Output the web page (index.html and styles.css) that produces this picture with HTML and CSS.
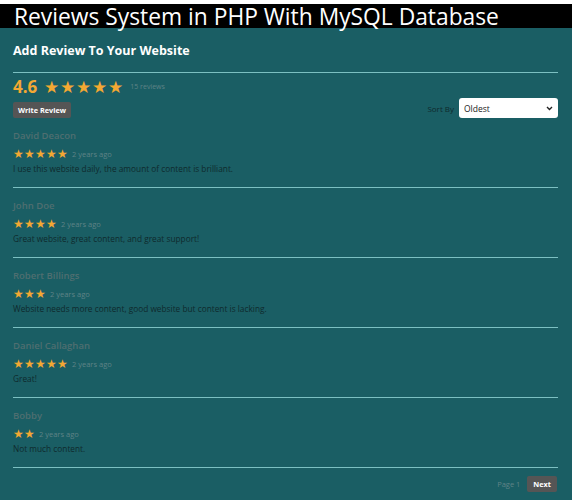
FILE: index.html
```html
<!DOCTYPE html>
<html lang="en">
<head>
  <meta charset="UTF-8" />
  <meta name="viewport" content="width=device-width, initial-scale=1.0"/>
  <title>Reviews System in PHP With MySQL Database</title>
  <link rel="stylesheet" href="styles.css">
</head>
<body>
  <h1 class="site-title">Reviews System in PHP With MySQL Database</h1>

  <div class="content">
    <h2>Add Review To Your Website</h2>

    <div class="reviews">
      <div class="overall">
        <div class="summary">
          <div class="rating">
            <span class="num">4.6</span>
            <span class="stars">★★★★★</span>
            <span class="total">15 reviews</span>
          </div>
          <a href="#" class="btn write-review-btn">Write Review</a>
        </div>
        <div class="sort">
          <label for="sort_by">Sort By</label>
          <div class="select-wrap">
            <select id="sort_by">
              <option value="oldest" selected>Oldest</option>
              <option value="newest">Newest</option>
              <option value="rating_highest">Highest Rating</option>
              <option value="rating_lowest">Lowest Rating</option>
            </select>
            <svg class="chevron" width="7" height="5" viewBox="0 0 7 5"><path d="M1 1l2.5 2.5L6 1" fill="none" stroke="#222" stroke-width="1.4"/></svg>
          </div>
        </div>
      </div>

      <div class="review">
        <h3 class="name">David Deacon</h3>
        <div class="meta">
          <span class="stars">★★★★★</span>
          <span class="date">2 years ago</span>
        </div>
        <p class="content-text">I use this website daily, the amount of content is brilliant.</p>
      </div>

      <div class="review">
        <h3 class="name">John Doe</h3>
        <div class="meta">
          <span class="stars">★★★★</span>
          <span class="date">2 years ago</span>
        </div>
        <p class="content-text">Great website, great content, and great support!</p>
      </div>

      <div class="review">
        <h3 class="name">Robert Billings</h3>
        <div class="meta">
          <span class="stars">★★★</span>
          <span class="date">2 years ago</span>
        </div>
        <p class="content-text">Website needs more content, good website but content is lacking.</p>
      </div>

      <div class="review">
        <h3 class="name">Daniel Callaghan</h3>
        <div class="meta">
          <span class="stars">★★★★★</span>
          <span class="date">2 years ago</span>
        </div>
        <p class="content-text">Great!</p>
      </div>

      <div class="review">
        <h3 class="name">Bobby</h3>
        <div class="meta">
          <span class="stars">★★</span>
          <span class="date">2 years ago</span>
        </div>
        <p class="content-text">Not much content.</p>
      </div>

      <div class="pagination">
        <span class="current">Page 1</span>
        <a href="#" class="btn">Next</a>
      </div>
    </div>
  </div>
</body>
</html>
```

FILE: styles.css
```css
body {
  margin: 0;
  background-color: #fff;
  font-family: "Open Sans", "Noto Sans", sans-serif;
}
.site-title {
  margin: 4px 0 0;
  padding: 1px 0 0 14px;
  height: 23px;
  background-color: #000;
  color: #fff;
  font-size: 22.8px;
  font-weight: normal;
  line-height: 23px;
  white-space: nowrap;
}
.content {
  background-color: #1a5e64;
  padding: 14px 14px 6px 13px;
  min-height: 472px;
  box-sizing: border-box;
}
h2 {
  margin: 0;
  padding-bottom: 12px;
  border-bottom: 1px solid #7cc0c2;
  color: #fff;
  font-size: 12.5px;
  line-height: 18px;
}
.overall {
  display: flex;
  justify-content: space-between;
  align-items: flex-end;
  padding-top: 3px;
}
.rating {
  display: flex;
  align-items: center;
  height: 20px;
}
.rating .num {
  color: #f3a833;
  font-size: 17px;
  font-weight: bold;
  margin-right: 7px;
}
.rating .stars {
  color: #f3a833;
  font-size: 17px;
  letter-spacing: 1px;
}
.rating .total {
  margin-left: 6px;
  color: #5f8386;
  font-size: 7px;
}
.btn {
  display: inline-block;
  background-color: #555;
  color: #fff;
  font-size: 7.3px;
  font-weight: bold;
  text-decoration: none;
  padding: 3px 5px;
  border-radius: 2px;
  line-height: 10px;
}
.write-review-btn {
  margin-top: 5px;
}
.sort {
  display: flex;
  align-items: center;
}
.sort label {
  color: #0f2a2d;
  font-size: 8px;
  margin-right: 5px;
}
.select-wrap {
  position: relative;
}
.sort select {
  display: block;
  width: 99px;
  height: 20px;
  border: 0;
  border-radius: 3px;
  background: #fff;
  color: #222;
  font-family: inherit;
  font-size: 8.5px;
  padding: 0 5px;
  appearance: none;
  -webkit-appearance: none;
}
.chevron {
  position: absolute;
  right: 5px;
  top: 8px;
  pointer-events: none;
}
.review {
  border-bottom: 1px solid #7cc0c2;
  padding: 11px 0 11px;
  height: 47px;
}
.review .name {
  margin: 0;
  color: #4f6e70;
  font-size: 9.5px;
  font-weight: 600;
  line-height: 14px;
}
.review .meta {
  display: flex;
  align-items: center;
  margin-top: 4px;
}
.review .stars {
  color: #f3a833;
  font-size: 12px;
  line-height: 14px;
}
.review .date {
  margin-left: 4px;
  color: #5f8386;
  font-size: 7.5px;
}
.review .content-text {
  margin: 1px 0 0;
  color: #0f2a2d;
  font-size: 8.3px;
  line-height: 13px;
}
.pagination {
  display: flex;
  justify-content: flex-end;
  align-items: center;
  gap: 7px;
  padding: 8px 1px 0;
}
.pagination .current {
  color: #5f8386;
  font-size: 7.5px;
}
.pagination .btn {
  padding: 3px 6px;
}
```
